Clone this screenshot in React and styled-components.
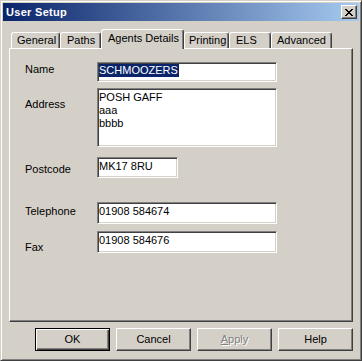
import React from 'react';
import styled, { createGlobalStyle } from 'styled-components';

const Global = createGlobalStyle`
  html, body { margin: 0; padding: 0; background: #D4D0C8; }
  body { font-family: "Liberation Sans", Arial, sans-serif; font-size: 11px; color: #000; }
`;

const Window = styled.div`
  box-sizing: border-box;
  width: 362px;
  height: 361px;
  background: #D4D0C8;
  border: 1px solid;
  border-color: #D4D0C8 #404040 #404040 #D4D0C8;
  box-shadow: inset 1px 1px #fff, inset -1px -1px #808080;
  padding: 2px;
  display: flex;
  flex-direction: column;
`;

const TitleBar = styled.div`
  flex: none;
  height: 18px;
  background: linear-gradient(to right, #0A246A, #A6CAF0);
  display: flex;
  align-items: center;
  justify-content: space-between;
  padding: 0 2px 0 2px;
`;

const Title = styled.span`
  color: #fff;
  font-weight: bold;
  font-size: 11px;
  letter-spacing: 0.3px;
  line-height: 13px;
  padding-left: 1px;
`;

const CloseButton = styled.button`
  box-sizing: border-box;
  width: 16px;
  height: 14px;
  padding: 0;
  margin: 0;
  background: #D4D0C8;
  border: 1px solid;
  border-color: #fff #404040 #404040 #fff;
  box-shadow: inset -1px -1px #808080;
  display: flex;
  align-items: center;
  justify-content: center;
`;

const Body = styled.div`
  flex: 1;
  display: flex;
  flex-direction: column;
  padding: 8px 6px 7px 6px;
`;

const TabStrip = styled.div`
  flex: none;
  height: 19px;
  display: flex;
  align-items: flex-end;
  padding-left: 2px;
`;

const Tab = styled.div`
  box-sizing: border-box;
  width: ${p => p.$w}px;
  height: ${p => (p.$active ? 20 : 16)}px;
  margin-bottom: ${p => (p.$active ? -1 : 0)}px;
  padding: ${p => (p.$active ? 2 : 1)}px 0 0 ${p => p.$pl}px;
  border: 1px solid;
  border-color: #fff #404040 transparent #fff;
  border-bottom: none;
  box-shadow: inset -1px 0 #808080;
  border-radius: 3px 3px 0 0;
  background: #D4D0C8;
  line-height: 13px;
  white-space: nowrap;
  overflow: hidden;
  position: relative;
  z-index: ${p => (p.$active ? 1 : 0)};
`;

const Panel = styled.div`
  flex: 1;
  border: 1px solid;
  border-color: #fff #404040 #404040 #fff;
  box-shadow: inset -1px -1px #808080;
  padding: 13px 0 0 15px;
  display: flex;
  flex-direction: column;
`;

const Row = styled.div`
  display: flex;
  margin-top: ${p => p.$mt}px;
`;

const Label = styled.div`
  width: 72px;
  flex: none;
  padding-top: ${p => p.$pt}px;
  line-height: 13px;
`;

const Field = styled.div`
  box-sizing: border-box;
  width: ${p => p.$w}px;
  height: ${p => p.$h}px;
  background: #fff;
  border: 1px solid;
  border-color: #808080 #fff #fff #808080;
  box-shadow: inset 1px 1px #404040, inset -1px -1px #D4D0C8;
  padding: ${p => p.$pt || 1}px 1px 1px 1px;
  line-height: 13px;
  white-space: pre-line;
  overflow: hidden;
`;

const Selected = styled.span`
  display: inline-block;
  background: #0A246A;
  color: #fff;
  padding-right: 1px;
`;

const ButtonRow = styled.div`
  flex: none;
  display: flex;
  justify-content: flex-end;
  gap: 6px;
  margin-top: 6px;
`;

const Button = styled.button`
  box-sizing: border-box;
  width: 75px;
  height: 23px;
  padding: 0;
  margin: 0;
  font: inherit;
  font-size: 11px;
  line-height: 13px;
  background: #D4D0C8;
  color: ${p => (p.disabled ? '#808080' : '#000')};
  text-shadow: ${p => (p.disabled ? '1px 1px #fff' : 'none')};
  border: 1px solid;
  border-color: ${p => (p.$default ? '#000' : '#fff #404040 #404040 #fff')};
  box-shadow: ${p =>
    p.$default
      ? 'inset 1px 1px #fff, inset -1px -1px #404040, inset -2px -2px #808080'
      : 'inset -1px -1px #808080'};
`;

const Mnemonic = styled.span`
  text-decoration: underline;
`;

const X_PATTERN = [
  'XX....XX',
  '.XX..XX.',
  '..XXXX..',
  '...XX...',
  '..XXXX..',
  '.XX..XX.',
  'XX....XX',
];

function CloseGlyph() {
  const rects = [];
  X_PATTERN.forEach((row, y) =>
    row.split('').forEach((c, x) => {
      if (c === 'X') rects.push(<rect key={`${x}-${y}`} x={x} y={y} width="1" height="1" />);
    })
  );
  return (
    <svg width="8" height="7" viewBox="0 0 8 7" shapeRendering="crispEdges" fill="#000">
      {rects}
    </svg>
  );
}

const tabs = [
  { label: 'General', w: 49, pl: 5 },
  { label: 'Paths', w: 41, pl: 6 },
  { label: 'Agents Details', w: 83, pl: 6, active: true },
  { label: 'Printing', w: 45, pl: 4 },
  { label: 'ELS', w: 42, pl: 6 },
  { label: 'Advanced', w: 61, pl: 5 },
];

export default function App() {
  return (
    <>
      <Global />
      <Window>
        <TitleBar>
          <Title>User Setup</Title>
          <CloseButton aria-label="Close">
            <CloseGlyph />
          </CloseButton>
        </TitleBar>
        <Body>
          <TabStrip>
            {tabs.map(t => (
              <Tab key={t.label} $w={t.w} $pl={t.pl} $active={t.active}>
                {t.label}
              </Tab>
            ))}
          </TabStrip>
          <Panel>
            <Row $mt={0}>
              <Label $pt={1}>Name</Label>
              <Field $w={180} $h={20}>
                <Selected>SCHMOOZERS</Selected>
              </Field>
            </Row>
            <Row $mt={6}>
              <Label $pt={10}>Address</Label>
              <Field $w={180} $h={59} $pt={2}>
                {'POSH GAFF\naaa\nbbbb'}
              </Field>
            </Row>
            <Row $mt={10}>
              <Label $pt={6}>Postcode</Label>
              <Field $w={81} $h={21} $pt={2}>MK17 8RU</Field>
            </Row>
            <Row $mt={24}>
              <Label $pt={3}>Telephone</Label>
              <Field $w={180} $h={22} $pt={2}>01908 584674</Field>
            </Row>
            <Row $mt={7}>
              <Label $pt={10}>Fax</Label>
              <Field $w={180} $h={22} $pt={2}>01908 584676</Field>
            </Row>
          </Panel>
          <ButtonRow>
            <Button $default>OK</Button>
            <Button>Cancel</Button>
            <Button disabled>
              <Mnemonic>A</Mnemonic>pply
            </Button>
            <Button>Help</Button>
          </ButtonRow>
        </Body>
      </Window>
    </>
  );
}
